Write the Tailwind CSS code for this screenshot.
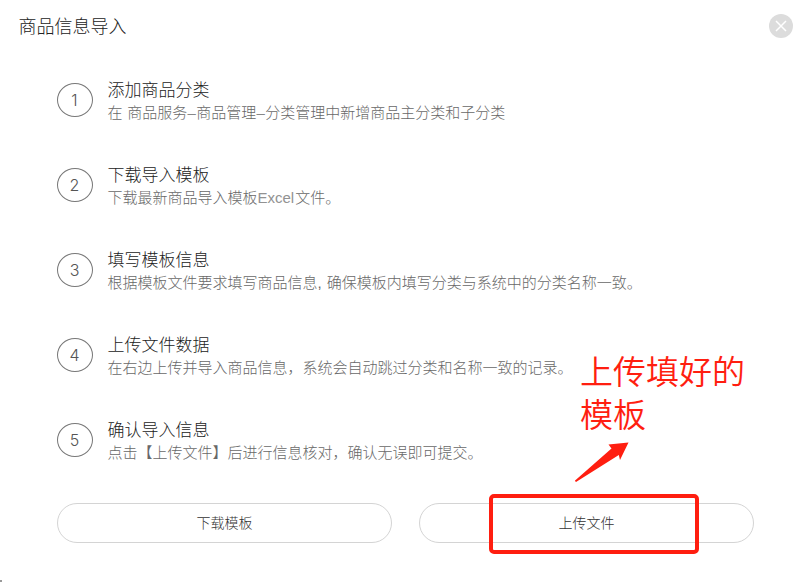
<!DOCTYPE html>
<html lang="zh-CN">
<head>
<meta charset="utf-8">
<title>商品信息导入</title>
<script src="https://cdn.jsdelivr.net/npm/@tailwindcss/browser@4"></script>
</head>
<body class="bg-white">
<main class="relative flex h-[582px] w-[807px] flex-col overflow-hidden bg-white font-['Liberation_Sans','Noto_Sans_CJK_SC',sans-serif] font-light text-[#222]">
  <header class="flex h-[51px] items-center justify-between pr-[14px] pl-[18.5px]">
    <h1 class="pt-[2px] text-[18px] leading-[26px]">商品信息导入</h1>
    <button class="flex size-6 items-center justify-center rounded-full bg-[#dcdcdc]" aria-label="关闭">
      <svg class="size-6" viewBox="0 0 24 24" fill="none" stroke="#fff" stroke-width="1.5"><path d="M7 7 17 17M17 7 7 17"/></svg>
    </button>
  </header>
  <ol class="flex flex-col pt-[28px] pl-[57px]">
    <li class="flex h-[85px] gap-[14.5px]">
      <span class="mt-1 flex h-[34px] w-9 items-center justify-center rounded-[50%] border border-[#777] pr-px font-['Inter'] text-[16px] text-[#555]">1</span>
      <div><h2 class="text-[17px] leading-6">添加商品分类</h2><p class="-mt-px text-[15px] leading-[22px] text-[#686868]">在 <span class="pl-[0.5px]">商品服务</span><span class="inline-block w-[9px] text-center text-[#888]">–</span>商品管理<span class="inline-block w-[9px] text-center text-[#888]">–</span>分类管理中新增商品主分类和子分类</p></div>
    </li>
    <li class="flex h-[85px] gap-[14.5px]">
      <span class="mt-1 flex h-[34px] w-9 items-center justify-center rounded-[50%] border border-[#777] pr-px font-['Inter'] text-[16px] text-[#555]">2</span>
      <div><h2 class="text-[17px] leading-6">下载导入模板</h2><p class="-mt-px text-[15px] leading-[22px] text-[#686868]">下载最新商品导入模板<span class="pr-px text-[#929292]">Excel</span>文件。</p></div>
    </li>
    <li class="flex h-[85px] gap-[14.5px]">
      <span class="mt-1 flex h-[34px] w-9 items-center justify-center rounded-[50%] border border-[#777] pr-px font-['Inter'] text-[16px] text-[#555]">3</span>
      <div><h2 class="text-[17px] leading-6">填写模板信息</h2><p class="-mt-px text-[15px] leading-[22px] text-[#686868]">根据模板文件要求填写商品信息, <span class="pl-px">确保模板内填写分类与系统中的分类名称一致。</span></p></div>
    </li>
    <li class="flex h-[85px] gap-[14.5px]">
      <span class="mt-1 flex h-[34px] w-9 items-center justify-center rounded-[50%] border border-[#777] pr-px font-['Inter'] text-[16px] text-[#555]">4</span>
      <div><h2 class="text-[17px] leading-6">上传文件数据</h2><p class="-mt-px text-[15px] leading-[22px] text-[#686868]">在右边上传并导入商品信息，系统会自动跳过分类和名称一致的记录。</p></div>
    </li>
    <li class="flex h-[85px] gap-[14.5px]">
      <span class="mt-1 flex h-[34px] w-9 items-center justify-center rounded-[50%] border border-[#777] pr-px font-['Inter'] text-[16px] text-[#555]">5</span>
      <div><h2 class="text-[17px] leading-6">确认导入信息</h2><p class="-mt-px text-[15px] leading-[22px] text-[#686868]">点击【上传文件】后进行信息核对，确认无误即可提交。</p></div>
    </li>
  </ol>
  <footer class="-mt-px flex gap-[27px] pl-[57px]">
    <button class="h-10 w-[335px] rounded-full border border-[#d4d4d4] text-[14px] text-[#333]">下载模板</button>
    <button class="h-10 w-[335px] rounded-full border border-[#d4d4d4] text-[14px] text-[#333]">上传文件</button>
  </footer>
  <p class="absolute top-[351px] left-[580px] w-[170px] text-[33px] leading-[43px] font-[350] text-[#ff1e10]">上传填好的<br>模板</p>
  <svg class="absolute top-[440px] left-[570px]" width="62" height="44" viewBox="570 440 62 44" fill="#ff1e10"><path d="M574.8 480.8 611.5 448.5 608.5 444.5 628.5 442.5 620 460 618.8 455 576 482Z"/></svg>
  <div class="absolute top-[494px] left-[489px] h-[60px] w-[210px] rounded-[5px] border-4 border-[#ff1e10]"></div>
  <div class="absolute bottom-0 left-0 h-[2px] w-[2px] bg-[#999]"></div>
</main>
</body>
</html>
